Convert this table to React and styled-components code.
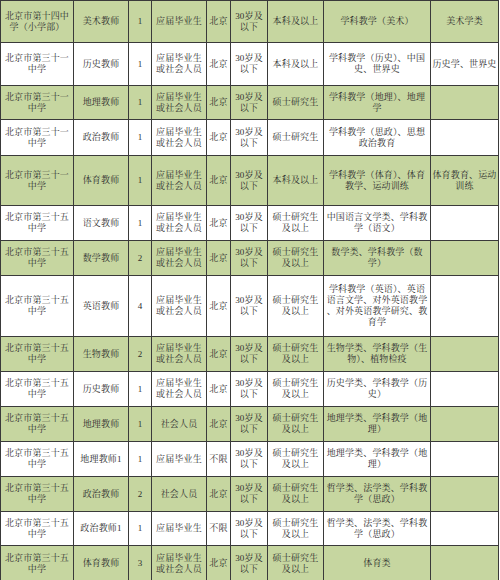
import React from "react";
import styled, { createGlobalStyle } from "styled-components";

const Global = createGlobalStyle`
  html, body { margin: 0; padding: 0; background: #ffffff; }
  body {
    font-family: "Liberation Serif", "Noto Serif CJK SC", "Noto Sans CJK SC", serif;
    color: #333;
  }
`;

const Page = styled.div`
  width: 500px;
  height: 580px;
  overflow: hidden;
  background: #fff;
`;

const Table = styled.table`
  width: 498px;
  table-layout: fixed;
  border-collapse: collapse;
  border: 1px solid #3a3a3a;
`;

const Col = styled.col`
  width: ${(p) => p.$w}px;
`;

const Row = styled.tr`
  height: ${(p) => p.$h}px;
  background: ${(p) => (p.$green ? "#c6d6a0" : "#ffffff")};
`;

const Cell = styled.td`
  border: 1px solid #3a3a3a;
  padding: 0;
  text-align: center;
  vertical-align: middle;
  font-size: 9px;
  line-height: 11px;
  letter-spacing: 0.15px;
  white-space: nowrap;
  overflow: hidden;
  color: #2e2e2e;
`;

const Line = styled.span`
  display: block;
`;

const widths = [73, 55, 23, 55, 24, 37, 56, 107, 68];

const A = ["北京市第三十一", "中学"];
const B = ["北京市第三十五", "中学"];
const AGE = ["30岁及", "以下"];
const BOTH = ["应届毕业生", "或社会人员"];
const MA = ["硕士研究生", "及以上"];

const rows = [
  { h: 42, c: [["北京市第十四中", "学（小学部）"], "美术教师", "1", "应届毕业生", "北京", AGE, "本科及以上", "学科教学（美术）", "美术学类"] },
  { h: 43, c: [A, "历史教师", "1", BOTH, "北京", AGE, "本科及以上", ["学科教学（历史）、中国", "史、世界史"], "历史学、世界史"] },
  { h: 34, c: [A, "地理教师", "1", BOTH, "北京", AGE, "硕士研究生", ["学科教学（地理）、地理", "学"], ""] },
  { h: 36, c: [A, "政治教师", "1", BOTH, "北京", AGE, "硕士研究生", ["学科教学（思政）、思想", "政治教育"], ""] },
  { h: 50, c: [A, "体育教师", "1", BOTH, "北京", AGE, "本科及以上", ["学科教学（体育）、体育", "教学、运动训练"], ["体育教育、运动", "训练"]] },
  { h: 35, c: [B, "语文教师", "1", BOTH, "北京", AGE, MA, ["中国语言文学类、学科教", "学（语文）"], ""] },
  { h: 35, c: [B, "数学教师", "2", BOTH, "北京", AGE, MA, ["数学类、学科教学（数", "学）"], ""] },
  { h: 61, c: [B, "英语教师", "4", BOTH, "北京", AGE, MA, ["学科教学（英语）、英语", "语言文学、对外英语教学", "、对外英语教学研究、教", "育学"], ""] },
  { h: 35, c: [B, "生物教师", "2", BOTH, "北京", AGE, MA, ["生物学类、学科教学（生", "物）、植物检疫"], ""] },
  { h: 35, c: [B, "历史教师", "1", BOTH, "北京", AGE, MA, ["历史学类、学科教学（历", "史）"], ""] },
  { h: 35, c: [B, "地理教师", "1", "社会人员", "北京", AGE, MA, ["地理学类、学科教学（地", "理）"], ""] },
  { h: 35, c: [B, "地理教师1", "1", "应届毕业生", "不限", AGE, MA, ["地理学类、学科教学（地", "理）"], ""] },
  { h: 35, c: [B, "政治教师", "2", "社会人员", "北京", AGE, MA, ["哲学类、法学类、学科教", "学（思政）"], ""] },
  { h: 34, c: [B, "政治教师1", "1", "应届毕业生", "不限", AGE, MA, ["哲学类、法学类、学科教", "学（思政）"], ""] },
  { h: 36, c: [B, "体育教师", "3", BOTH, "北京", AGE, MA, "体育类", ""] },
];

function Content({ v }) {
  const lines = Array.isArray(v) ? v : [v];
  return lines.map((l, i) => <Line key={i}>{l}</Line>);
}

export default function App() {
  return (
    <Page>
      <Global />
      <Table>
        <colgroup>
          {widths.map((w, i) => (
            <Col key={i} $w={w} />
          ))}
        </colgroup>
        <tbody>
          {rows.map((r, i) => (
            <Row key={i} $h={r.h} $green={i % 2 === 0}>
              {r.c.map((v, j) => (
                <Cell key={j}>
                  <Content v={v} />
                </Cell>
              ))}
            </Row>
          ))}
        </tbody>
      </Table>
    </Page>
  );
}
